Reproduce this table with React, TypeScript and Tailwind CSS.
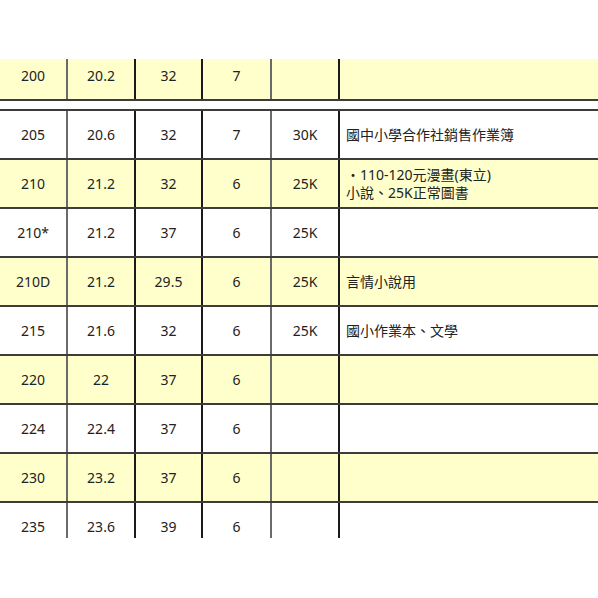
import React from "react";

type Row = { a: string; b: string; c: string; d: string; e: string; f: React.ReactNode; y: boolean };

const rows: Row[] = [
  { a: "205", b: "20.6", c: "32", d: "7", e: "30K", f: "國中小學合作社銷售作業簿", y: false },
  {
    a: "210",
    b: "21.2",
    c: "32",
    d: "6",
    e: "25K",
    f: (
      <div className="leading-[18px]">
        <div>・110-120元漫畫(東立)</div>
        <div>小說、25K正常圖書</div>
      </div>
    ),
    y: true,
  },
  { a: "210*", b: "21.2", c: "37", d: "6", e: "25K", f: "", y: false },
  { a: "210D", b: "21.2", c: "29.5", d: "6", e: "25K", f: "言情小說用", y: true },
  { a: "215", b: "21.6", c: "32", d: "6", e: "25K", f: "國小作業本、文學", y: false },
  { a: "220", b: "22", c: "37", d: "6", e: "", f: "", y: true },
  { a: "224", b: "22.4", c: "37", d: "6", e: "", f: "", y: false },
  { a: "230", b: "23.2", c: "37", d: "6", e: "", f: "", y: true },
  { a: "235", b: "23.6", c: "39", d: "6", e: "", f: "", y: false },
];

function Cells({ r }: { r: Row }) {
  return (
    <>
      <div className="flex items-center justify-center border-r-2 border-[#6a6a6a]">{r.a}</div>
      <div className="flex items-center justify-center border-r-2 border-[#1a1a1a]">{r.b}</div>
      <div className="flex items-center justify-center border-r-2 border-[#1a1a1a]">{r.c}</div>
      <div className="flex items-center justify-center border-r-2 border-[#6a6a6a]">{r.d}</div>
      <div className="flex items-center justify-center border-r-2 border-[#1a1a1a]">{r.e}</div>
      <div className="flex items-center pl-[6px]">{r.f}</div>
    </>
  );
}

const grid = "grid grid-cols-[68px_68px_67px_69px_68px_1fr] h-[49px] border-b-2 border-[#3c3c3c]";

export default function App() {
  return (
    <div
      className="w-[598px] h-[598px] bg-white text-[14px] text-[#222]"
      style={{ fontFamily: '"Noto Sans", "Noto Sans CJK TC", sans-serif' }}
    >
      <div className="h-[59px]" />
      <div className="h-[479px] overflow-hidden">
        <div className="-mt-[7px]">
          <div className={`${grid} bg-[#ffffcc]`}>
            <Cells r={{ a: "200", b: "20.2", c: "32", d: "7", e: "", f: "", y: true }} />
          </div>
          <div className="h-[8px] bg-white" />
          <div className="border-t-2 border-[#3c3c3c]">
            {rows.map((r, i) => (
              <div key={i} className={`${grid} ${r.y ? "bg-[#ffffcc]" : "bg-white"}`}>
                <Cells r={r} />
              </div>
            ))}
          </div>
        </div>
      </div>
    </div>
  );
}
